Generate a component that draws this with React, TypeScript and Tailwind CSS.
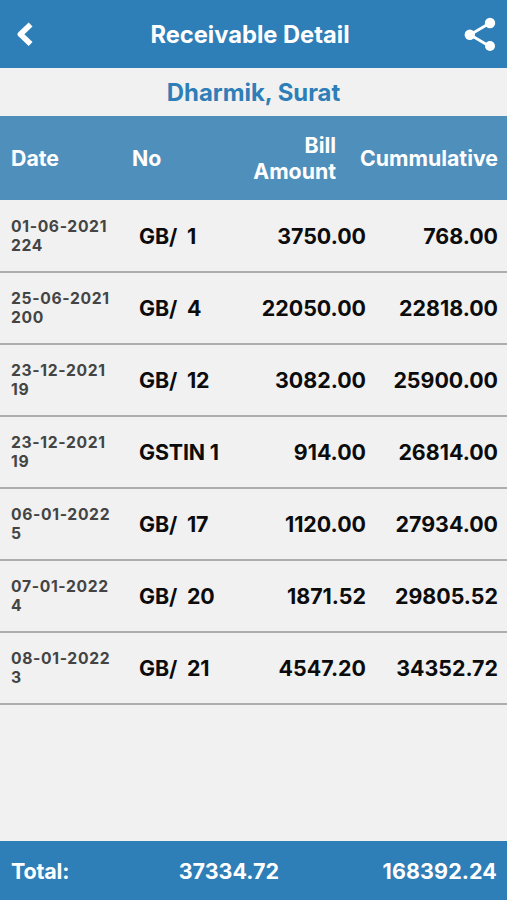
import React from "react";

interface Bill {
  date: string;
  days: string;
  no: string;
  amount: string;
  cumulative: string;
}

const bills: Bill[] = [
  { date: "01-06-2021", days: "224", no: "GB/  1", amount: "3750.00", cumulative: "768.00" },
  { date: "25-06-2021", days: "200", no: "GB/  4", amount: "22050.00", cumulative: "22818.00" },
  { date: "23-12-2021", days: "19", no: "GB/  12", amount: "3082.00", cumulative: "25900.00" },
  { date: "23-12-2021", days: "19", no: "GSTIN 1", amount: "914.00", cumulative: "26814.00" },
  { date: "06-01-2022", days: "5", no: "GB/  17", amount: "1120.00", cumulative: "27934.00" },
  { date: "07-01-2022", days: "4", no: "GB/  20", amount: "1871.52", cumulative: "29805.52" },
  { date: "08-01-2022", days: "3", no: "GB/  21", amount: "4547.20", cumulative: "34352.72" },
];

function Header() {
  return (
    <header className="flex h-[68px] items-center justify-between bg-[#2e7eb7] text-white">
      <svg className="ml-4 h-7 w-[18px]" viewBox="0 0 18 28" fill="none" stroke="currentColor" strokeWidth="5.6" strokeLinejoin="round">
        <path d="M14.6 4.4 L4.4 14.2 L14.6 24" />
      </svg>
      <h1 className="pt-0.5 pl-[2px] text-[23.7px] font-bold">Receivable Detail</h1>
      <svg className="mr-[11px] h-[34px] w-8" viewBox="0 0 32 34" fill="currentColor">
        <path d="M26 6 L6 17.7 L26 29.5" fill="none" stroke="currentColor" strokeWidth="2.8" />
        <circle cx="26" cy="6" r="5.2" />
        <circle cx="5.8" cy="17.7" r="5.2" />
        <circle cx="26" cy="29" r="5" />
      </svg>
    </header>
  );
}

function BillRow({ bill }: { bill: Bill }) {
  return (
    <div className="flex h-[72px] items-center border-b-2 border-[#adadad] pr-[9px] pl-[11px] text-[21.4px] font-bold text-[#0c0c0c]">
      <div className="w-32 text-[15.7px] leading-[19.5px] tracking-[0.65px] text-[#444]">
        <div>{bill.date}</div>
        <div>{bill.days}</div>
      </div>
      <div className="w-[100px] tracking-[-0.15px] whitespace-pre">{bill.no}</div>
      <div className="flex-1 text-right">{bill.amount}</div>
      <div className="w-[132px] text-right">{bill.cumulative}</div>
    </div>
  );
}

export default function App() {
  return (
    <div className="flex h-screen w-full flex-col overflow-hidden bg-[#f1f1f1] font-['Inter',sans-serif]">
      <Header />
      <h2 className="flex h-12 items-center justify-center pt-0.5 text-[23.9px] font-bold text-[#2e7eb7]">
        Dharmik, Surat
      </h2>
      <div className="flex h-[84px] items-center bg-[#4f8fbc] pr-[9px] pl-[11px] text-[21.3px] leading-[26px] font-bold text-white">
        <div className="w-[121px]">Date</div>
        <div className="w-[100px]">No</div>
        <div className="w-[104px] text-right">Bill Amount</div>
        <div className="flex-1 text-right">Cummulative</div>
      </div>
      <main className="flex-1 pt-px">
        {bills.map((bill) => (
          <BillRow key={bill.no} bill={bill} />
        ))}
      </main>
      <footer className="flex h-[59px] items-center bg-[#2e7eb7] pt-px pr-[10px] pl-[11px] text-[21.5px] font-bold text-white">
        <div className="w-[120px] tracking-[-0.2px]">Total:</div>
        <div className="w-[148px] text-right">37334.72</div>
        <div className="flex-1 text-right tracking-[0.1px]">168392.24</div>
      </footer>
    </div>
  );
}
